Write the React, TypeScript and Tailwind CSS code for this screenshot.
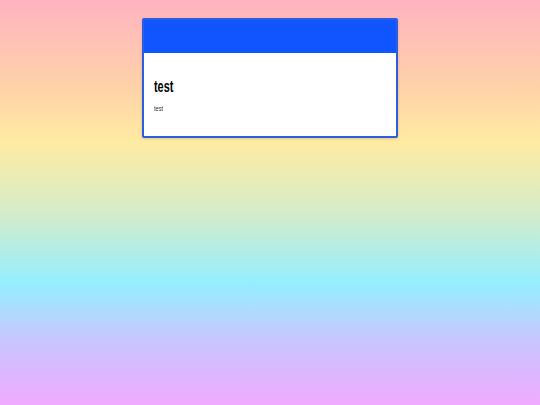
export default function App() {
  return (
    <div className="min-h-screen w-full bg-[linear-gradient(to_bottom,#ffb3c1_0%,#fed3a8_22%,#ffeba2_35%,#d6ecc8_52%,#95eeff_70%,#c8c6fe_84%,#f0aaff_100%)] pt-[18px] font-['Liberation_Sans',Arial,sans-serif]">
      <div className="mx-auto w-[256px] rounded-[2px] border-2 border-[#2d5de0] bg-white shadow-[0_1px_3px_rgba(0,0,0,0.15)] overflow-hidden">
        <div className="h-[33px] bg-[#1155ff]"></div>
        <div className="h-[83px] px-[10px] pt-[22px]">
          <h1 className="inline-block origin-left scale-x-[0.64] text-[17px] font-bold leading-[20px] text-black">test</h1>
          <p className="mt-[5px] origin-left scale-x-[0.8] text-[7px] leading-[9px] text-[#333]">test</p>
        </div>
      </div>
    </div>
  );
}
